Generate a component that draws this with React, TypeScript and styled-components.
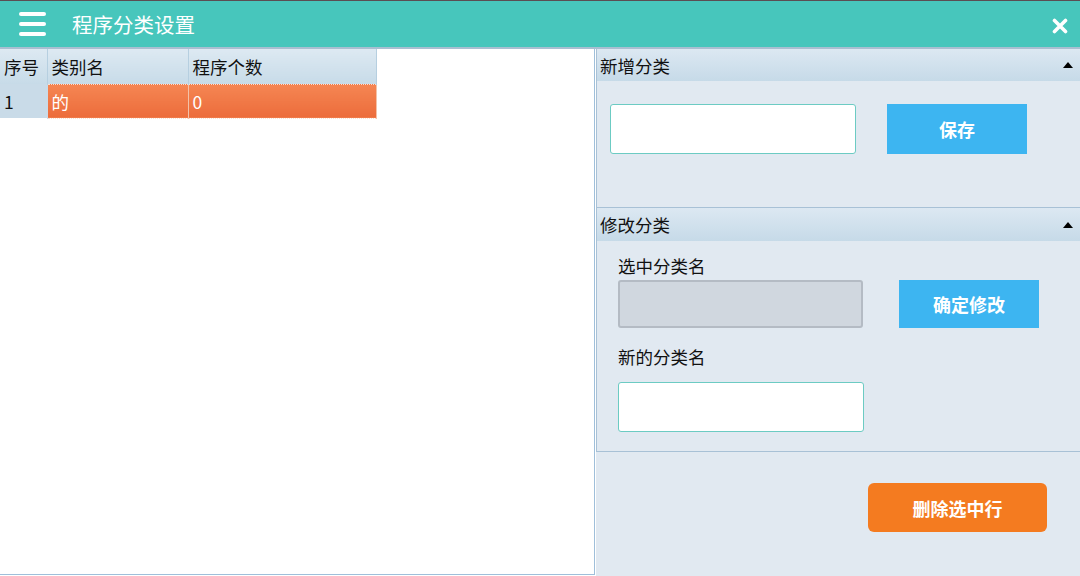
import React from "react";
import styled, { createGlobalStyle } from "styled-components";

const GlobalStyle = createGlobalStyle`
  html, body {
    margin: 0;
    padding: 0;
    background: #ffffff;
  }
  body {
    font-family: "Noto Sans CJK SC", "Noto Sans", "Liberation Sans", sans-serif;
  }
  * {
    box-sizing: border-box;
  }
`;

const Page = styled.div`
  width: 1080px;
  height: 576px;
  display: flex;
  flex-direction: column;
  overflow: hidden;
  background: #ffffff;
`;

const TopBar = styled.header`
  height: 49px;
  flex: none;
  display: flex;
  align-items: center;
  background: #47c6bc;
  border-top: 1px solid #5b4d52;
  border-bottom: 2px solid #a9bfd1;
  padding: 0 12px 0 19px;
  color: #ffffff;
`;

const MenuIcon = styled.div`
  width: 27px;
  display: flex;
  flex-direction: column;
  gap: 6px;
  margin-right: 26px;
  span {
    display: block;
    height: 4px;
    border-radius: 2px;
    background: #ffffff;
  }
`;

const Title = styled.h1`
  margin: 0;
  font-size: 20.5px;
  font-weight: 400;
  line-height: 1;
  flex: 1;
`;

const CloseButton = styled.button`
  border: 0;
  background: none;
  padding: 0;
  width: 16px;
  height: 16px;
  display: flex;
  margin-top: 4px;
`;

const Body = styled.div`
  flex: 1;
  display: flex;
  min-height: 0;
`;

const LeftPanel = styled.div`
  width: 595px;
  flex: none;
  height: 526px;
  border-right: 1px solid #9fbfda;
  border-bottom: 1px solid #9fbfda;
  background: #ffffff;
`;

const Grid = styled.table`
  border-collapse: collapse;
  table-layout: fixed;
  font-size: 17.5px;
  color: #111111;
`;

const HeadCell = styled.th<{ $w: number }>`
  width: ${(p) => p.$w}px;
  height: 35px;
  padding: 0 0 0 4px;
  text-align: left;
  font-weight: 400;
  background: linear-gradient(#dde9f2, #c7dbe8);
  border-right: 1px solid #b6cfe0;
`;

const Cell = styled.td<{ $selected?: boolean }>`
  height: 34px;
  padding: 0 0 0 4px;
  color: ${(p) => (p.$selected ? "#ffffff" : "#111111")};
  background: ${(p) =>
    p.$selected ? "linear-gradient(#f58653, #ec6c3b)" : "#c9dbe8"};
  border: ${(p) => (p.$selected ? "1px dotted #f9e0d2" : "0")};
  border-right: 1px solid ${(p) => (p.$selected ? "#f3c2a8" : "#c9dbe8")};
`;

const RightPanel = styled.div`
  flex: 1;
  margin-left: 1px;
  background: #e1e9f1;
  display: flex;
  flex-direction: column;
`;

const Section = styled.section`
  border-left: 1px solid #a8c1d6;
  border-bottom: 1px solid #a8c1d6;
`;

const SectionHead = styled.div<{ $h: number }>`
  height: ${(p) => p.$h}px;
  display: flex;
  align-items: center;
  justify-content: space-between;
  padding: 0 7px 0 3px;
  font-size: 17.5px;
  color: #111111;
  background: linear-gradient(#dce8f2, #c6dae8);
`;

const Caret = styled.span`
  width: 0;
  height: 0;
  border-left: 5px solid transparent;
  border-right: 5px solid transparent;
  border-bottom: 6px solid #000000;
`;

const SectionBody = styled.div<{ $pad: string }>`
  padding: ${(p) => p.$pad};
`;

const Row = styled.div<{ $gap: number }>`
  display: flex;
  align-items: flex-end;
  gap: ${(p) => p.$gap}px;
`;

const Field = styled.div`
  display: flex;
  flex-direction: column;
`;

const Label = styled.label<{ $top?: number }>`
  font-size: 17.5px;
  line-height: 24px;
  color: #111111;
  margin-top: ${(p) => p.$top ?? 0}px;
  margin-bottom: 2px;
`;

const TextInput = styled.input<{ $w: number; $h: number; $top?: number }>`
  width: ${(p) => p.$w}px;
  height: ${(p) => p.$h}px;
  margin-top: ${(p) => p.$top ?? 0}px;
  border: 1px solid #6ccbc3;
  border-radius: 3px;
  background: #ffffff;
  outline: none;
  padding: 0 8px;
  font-size: 17px;
  &:disabled {
    background: #d0d7df;
    border: 2px solid #b4bbc4;
  }
`;

const BlueButton = styled.button<{ $h: number }>`
  width: 140px;
  height: ${(p) => p.$h}px;
  border: 0;
  background: #3db5f1;
  color: #ffffff;
  font-family: inherit;
  font-size: 18px;
  font-weight: 700;
`;

const Footer = styled.div`
  display: flex;
  justify-content: flex-end;
  padding: 31px 33px 0 0;
`;

const OrangeButton = styled.button`
  width: 179px;
  height: 49px;
  border: 0;
  border-radius: 6px;
  background: #f47b20;
  color: #ffffff;
  font-family: inherit;
  font-size: 18px;
  font-weight: 700;
`;

export default function App() {
  return (
    <>
      <GlobalStyle />
      <Page>
        <TopBar>
          <MenuIcon>
            <span />
            <span />
            <span />
          </MenuIcon>
          <Title>程序分类设置</Title>
          <CloseButton aria-label="关闭">
            <svg width="16" height="16" viewBox="0 0 16 16">
              <path
                d="M2.5 2.5 L13.5 13.5 M13.5 2.5 L2.5 13.5"
                stroke="#ffffff"
                strokeWidth="3.6"
                strokeLinecap="round"
              />
            </svg>
          </CloseButton>
        </TopBar>
        <Body>
          <LeftPanel>
            <Grid>
              <thead>
                <tr>
                  <HeadCell $w={47}>序号</HeadCell>
                  <HeadCell $w={141}>类别名</HeadCell>
                  <HeadCell $w={188}>程序个数</HeadCell>
                </tr>
              </thead>
              <tbody>
                <tr>
                  <Cell>1</Cell>
                  <Cell $selected>的</Cell>
                  <Cell $selected>0</Cell>
                </tr>
              </tbody>
            </Grid>
          </LeftPanel>
          <RightPanel>
            <Section>
              <SectionHead $h={32}>
                新增分类
                <Caret />
              </SectionHead>
              <SectionBody $pad="23px 0 53px 13px">
                <Row $gap={31}>
                  <TextInput $w={246} $h={50} />
                  <BlueButton $h={50}>保存</BlueButton>
                </Row>
              </SectionBody>
            </Section>
            <Section>
              <SectionHead $h={33}>
                修改分类
                <Caret />
              </SectionHead>
              <SectionBody $pad="13px 0 19px 21px">
                <Row $gap={36}>
                  <Field>
                    <Label>选中分类名</Label>
                    <TextInput $w={245} $h={48} disabled />
                  </Field>
                  <BlueButton $h={48}>确定修改</BlueButton>
                </Row>
                <Field>
                  <Label $top={17}>新的分类名</Label>
                  <TextInput $w={246} $h={50} $top={11} />
                </Field>
              </SectionBody>
            </Section>
            <Footer>
              <OrangeButton>删除选中行</OrangeButton>
            </Footer>
          </RightPanel>
        </Body>
      </Page>
    </>
  );
}
